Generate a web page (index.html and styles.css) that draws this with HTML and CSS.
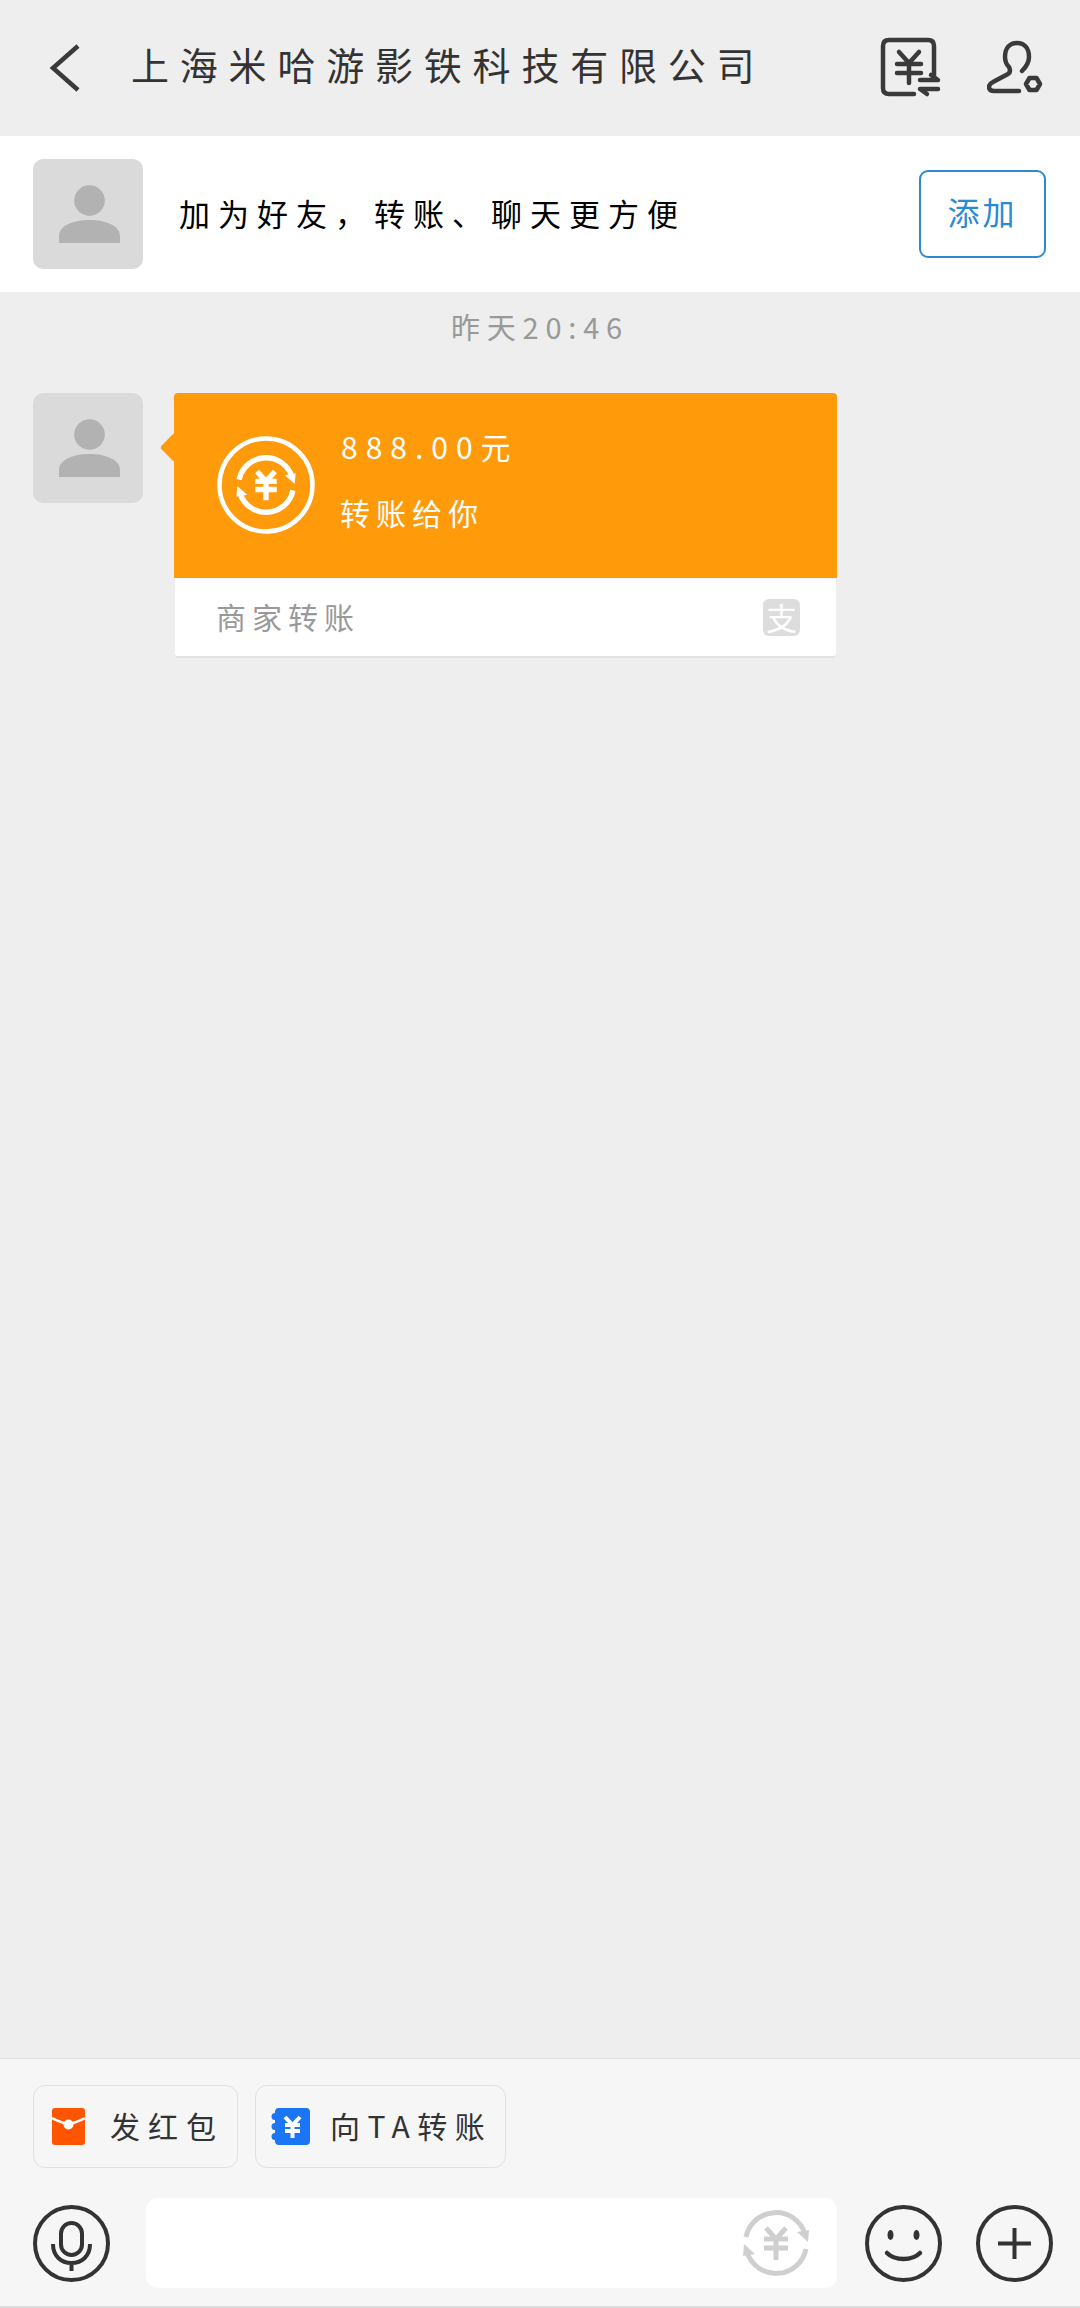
FILE: index.html
```html
<!DOCTYPE html>
<html lang="zh-CN">
<head>
<meta charset="utf-8">
<title>聊天</title>
<link rel="stylesheet" href="styles.css">
</head>
<body>
<svg class="defs" aria-hidden="true">
  <symbol id="swap" viewBox="-34 -34 68 68">
    <path class="swap-line" d="M-30 -6A30.5 30.5 0 0 1 29 -9"/>
    <path class="swap-line" d="M30 6A30.5 30.5 0 0 1 -29 9"/>
    <path class="swap-head" d="M21 -11L33 -13L32 -1Z"/>
    <path class="swap-head" d="M-21 11L-33 13L-32 1Z"/>
    <path class="swap-line" d="M-10 -15L0 -4L10 -15M-12 -4H12M-12 5H12M0 -4V17"/>
  </symbol>
  <symbol id="person" viewBox="0 0 110 110">
    <circle cx="56.5" cy="41.5" r="15.3"/>
    <path d="M26 84V77C26 67 40 61 56.5 61S87 67 87 77V84Z"/>
  </symbol>
</svg>
<div class="page">
  <header class="topbar">
    <svg class="back" viewBox="49 44 32 52"><path d="M78 48L53 70L78 92"/></svg>
    <div class="title">上海米哈游影铁科技有限公司</div>
    <div class="top-icons">
      <svg class="ico-receipt" viewBox="879 39 62 61">
        <path d="M914 96H889C885 96 883 94 883 90V48C883 44 885 42 889 42H928C932 42 934 44 934 48V79"/>
        <path d="M899 54L909 65L919 54M897 66H921M897 75H921M909 65V85"/>
        <path d="M920 82H938L931 77M938 91H920L927 96"/>
      </svg>
      <svg class="ico-user" viewBox="987 43 57 56">
        <path d="M1019 94H994C988 94 987 88 993 85L1008 77C1011 75 1010 72 1009 70C1006 67 1005 63 1005 60C1005 51 1010 46 1017 46C1024 46 1029 51 1029 60C1029 66 1026 70 1022 74"/>
        <path d="M1026 87L1029.500 81H1036.500L1040 87L1036.500 93H1029.500Z"/>
      </svg>
    </div>
  </header>

  <section class="promo">
    <svg class="avatar avatar-small"><use href="#person"/></svg>
    <div class="promo-text">加为好友，转账、聊天更方便</div>
    <button class="add-btn"><span class="add-label">添加</span></button>
  </section>

  <main class="chat">
    <div class="time">昨天20:46</div>
    <div class="msg">
      <svg class="avatar"><use href="#person"/></svg>
      <article class="card">
        <div class="card-main">
          <svg class="card-icon" viewBox="0 0 98 98">
            <circle class="card-ring" cx="49" cy="49" r="46.5"/>
            <use class="card-swap" href="#swap" x="18.500" y="18.500" width="61" height="61"/>
          </svg>
          <div class="card-text">
            <div class="amount">888.00元</div>
            <div class="sub">转账给你</div>
          </div>
        </div>
        <div class="card-foot">
          <span class="foot-label">商家转账</span>
          <span class="alipay">支</span>
        </div>
      </article>
    </div>
  </main>

  <footer class="bottom">
    <div class="chips">
      <div class="chip chip-red">
        <svg class="chip-icon-red" viewBox="0 0 33 37">
          <rect class="red-body" width="33" height="37" rx="3"/>
          <path class="red-flap" d="M0 10C6 13 11 15 16.500 16C22 15 27 13 33 10"/>
          <circle class="red-seal" cx="16.500" cy="16.500" r="5"/>
        </svg>
        <span class="chip-label">发红包</span>
      </div>
      <div class="chip chip-blue">
        <svg class="chip-icon-blue" viewBox="0 0 39 37">
          <path class="blue-body" d="M8 0H35A4 4 0 0 1 39 4V33A4 4 0 0 1 35 37H8A4 4 0 0 1 4 33V32A3.500 3.500 0 0 1 4 25V22A3.500 3.500 0 0 1 4 15V12A3.500 3.500 0 0 1 4 5V4A4 4 0 0 1 8 0Z"/>
          <path class="blue-yen" d="M14 9L21.500 17L29 9M14 17H29M14 23H29M21.500 17V30"/>
        </svg>
        <span class="chip-label chip-label-blue">向TA转账</span>
      </div>
    </div>
    <div class="input-row">
      <svg class="round-ico" viewBox="0 0 77 77">
        <circle cx="38.500" cy="38.500" r="36.500"/>
        <rect x="28" y="18" width="21" height="32" rx="10.500"/>
        <path d="M20 39C20 51 28 58 38.500 58S57 51 57 39M38.500 58V66"/>
      </svg>
      <div class="input-box">
        <svg class="input-swap"><use href="#swap"/></svg>
      </div>
      <svg class="round-ico" viewBox="0 0 77 77">
        <circle cx="38.500" cy="38.500" r="36.500"/>
        <ellipse class="eye" cx="25.500" cy="30" rx="3" ry="5"/>
        <ellipse class="eye" cx="51.500" cy="30" rx="3" ry="5"/>
        <path class="mouth" d="M22 48C30 56 47 56 55 48"/>
      </svg>
      <svg class="round-ico" viewBox="0 0 77 77">
        <circle cx="38.500" cy="38.500" r="36.500"/>
        <path d="M22 38.500H55M38.500 23V54"/>
      </svg>
    </div>
  </footer>
</div>
</body>
</html>
```

FILE: styles.css
```css
* { box-sizing: border-box; }

html, body {
  margin: 0;
  padding: 0;
}

body {
  width: 1080px;
  height: 2308px;
  overflow: hidden;
  background: #eeeeee;
  font-family: "Noto Sans CJK SC", "Noto Sans", sans-serif;
  font-weight: 400;
}

.defs {
  width: 0;
  height: 0;
  position: absolute;
}

.swap-line {
  fill: none;
  stroke-linecap: butt;
}

.swap-head {
  stroke: none;
}

.page {
  display: flex;
  flex-direction: column;
  height: 2308px;
}

/* top bar */
.topbar {
  height: 136px;
  flex: none;
  display: flex;
  align-items: center;
  padding: 0 36px 0 49px;
  color: #333333;
}

.back {
  width: 32px;
  height: 52px;
  fill: none;
  stroke: #3a3a3a;
  stroke-width: 4.500;
}

.title {
  margin-left: 50px;
  margin-bottom: 9px;
  font-size: 38px;
  letter-spacing: 10.800px;
  line-height: 50px;
  white-space: nowrap;
}

.top-icons {
  margin-left: auto;
  display: flex;
  align-items: center;
  gap: 46px;
  margin-top: -1px;
}

.ico-receipt {
  width: 62px;
  height: 61px;
  fill: none;
  stroke: #3a3a3a;
  stroke-width: 4.500;
  stroke-linecap: round;
  stroke-linejoin: round;
}

.ico-user {
  width: 57px;
  height: 56px;
  fill: none;
  stroke: #3a3a3a;
  stroke-width: 4.500;
  stroke-linecap: round;
  stroke-linejoin: round;
}

/* add-friend strip */
.promo {
  height: 156px;
  flex: none;
  background: #ffffff;
  display: flex;
  align-items: center;
  padding: 0 34px 1px 33px;
}

.avatar {
  width: 110px;
  height: 110px;
  flex: none;
  border-radius: 10px;
  background: #dadada;
  fill: #b2b2b2;
}

.promo-text {
  margin-left: 36px;
  margin-bottom: 2px;
  font-size: 31px;
  letter-spacing: 8px;
  color: #000000;
  white-space: nowrap;
}

.add-btn {
  margin-left: auto;
  width: 127px;
  height: 88px;
  padding: 0 0 5px;
  border: 2px solid #2a8ad4;
  border-radius: 9px;
  background: #ffffff;
  color: #2a8ad4;
  font-family: inherit;
  font-size: 32px;
  font-weight: 400;
}

.add-label {
  letter-spacing: 3px;
}

/* chat area */
.chat {
  flex: 1;
  min-height: 0;
}

.time {
  height: 101px;
  padding-bottom: 33px;
  display: flex;
  align-items: center;
  justify-content: center;
  color: #999999;
  font-size: 29px;
  letter-spacing: 6.800px;
}

.msg {
  display: flex;
  align-items: flex-start;
  gap: 31px;
  padding-left: 33px;
}

.card {
  position: relative;
  width: 663px;
  border-radius: 4px;
}

.card::before {
  content: "";
  position: absolute;
  left: -10px;
  top: 44px;
  width: 21px;
  height: 21px;
  background: #ff9a0a;
  border-radius: 3px;
  transform: rotate(45deg);
}

.card-main {
  position: relative;
  height: 185px;
  display: flex;
  align-items: flex-start;
  padding: 43px 0 0 43px;
  background: #ff9a0a;
  border-radius: 4px 4px 0 0;
  color: #ffffff;
}

.card-icon {
  width: 98px;
  height: 98px;
  flex: none;
}

.card-ring {
  fill: none;
  stroke: #ffffff;
  stroke-width: 4.500;
}

.card-swap {
  fill: #ffffff;
  stroke: #ffffff;
  stroke-width: 6;
}

.card-text {
  margin-left: 26px;
  margin-top: -10px;
}

.amount {
  height: 40px;
  line-height: 40px;
  font-size: 30px;
  letter-spacing: 8px;
  white-space: nowrap;
}

.sub {
  height: 40px;
  margin-top: 26px;
  margin-left: -1px;
  line-height: 40px;
  font-size: 30px;
  letter-spacing: 6px;
  white-space: nowrap;
}

.card-foot {
  height: 80px;
  margin: 0 1px;
  padding: 0 36px 0 41px;
  display: flex;
  align-items: center;
  justify-content: space-between;
  background: #ffffff;
  border-bottom: 2px solid #e2e2e2;
  border-radius: 0 0 4px 4px;
}

.foot-label {
  margin-bottom: 3px;
  color: #999999;
  font-size: 30px;
  letter-spacing: 6px;
}

.alipay {
  width: 37px;
  height: 37px;
  border-radius: 6px;
  background: #dddddd;
  color: #ffffff;
  font-size: 31px;
  line-height: 36px;
  text-align: center;
}

/* bottom composer */
.bottom {
  height: 250px;
  flex: none;
  background: #f6f6f6;
  border-top: 1px solid #dcdcdc;
  border-bottom: 2px solid #dddddd;
  padding-top: 26px;
}

.chips {
  display: flex;
  gap: 17px;
  padding-left: 33px;
}

.chip {
  height: 83px;
  display: flex;
  align-items: center;
  border: 1px solid #e0e0e0;
  border-radius: 12px;
  color: #333333;
  font-size: 30px;
  white-space: nowrap;
}

.chip-red {
  width: 205px;
  padding-left: 18px;
}

.chip-blue {
  width: 251px;
  padding-left: 15px;
}

.chip-icon-red {
  width: 33px;
  height: 37px;
  flex: none;
}

.red-body { fill: #ff5500; }
.red-flap { fill: none; stroke: #ffffff; stroke-width: 2.500; }
.red-seal { fill: #ffffff; }

.chip-icon-blue {
  width: 39px;
  height: 37px;
  flex: none;
}

.blue-body { fill: #1a76f5; }
.blue-yen { fill: none; stroke: #ffffff; stroke-width: 4; }

.chip-label {
  margin-left: 25px;
  margin-bottom: 3px;
  letter-spacing: 8px;
}

.chip-label-blue {
  margin-left: 20px;
  letter-spacing: 7.500px;
}

.input-row {
  margin-top: 30px;
  display: flex;
  align-items: center;
  padding-left: 33px;
  gap: 34px;
}

.round-ico {
  width: 77px;
  height: 77px;
  flex: none;
  fill: none;
  stroke: #333333;
  stroke-width: 4;
}

.eye {
  fill: #333333;
  stroke: none;
}

.mouth {
  stroke-width: 4.500;
  stroke-linecap: round;
}

.input-box {
  width: 691px;
  height: 90px;
  margin: 0 -6px 0 2px;
  padding-right: 27px;
  display: flex;
  align-items: center;
  justify-content: flex-end;
  background: #ffffff;
  border-radius: 12px;
}

.input-swap {
  width: 68px;
  height: 68px;
  fill: #cfcfcf;
  stroke: #cfcfcf;
  stroke-width: 5;
}
```
